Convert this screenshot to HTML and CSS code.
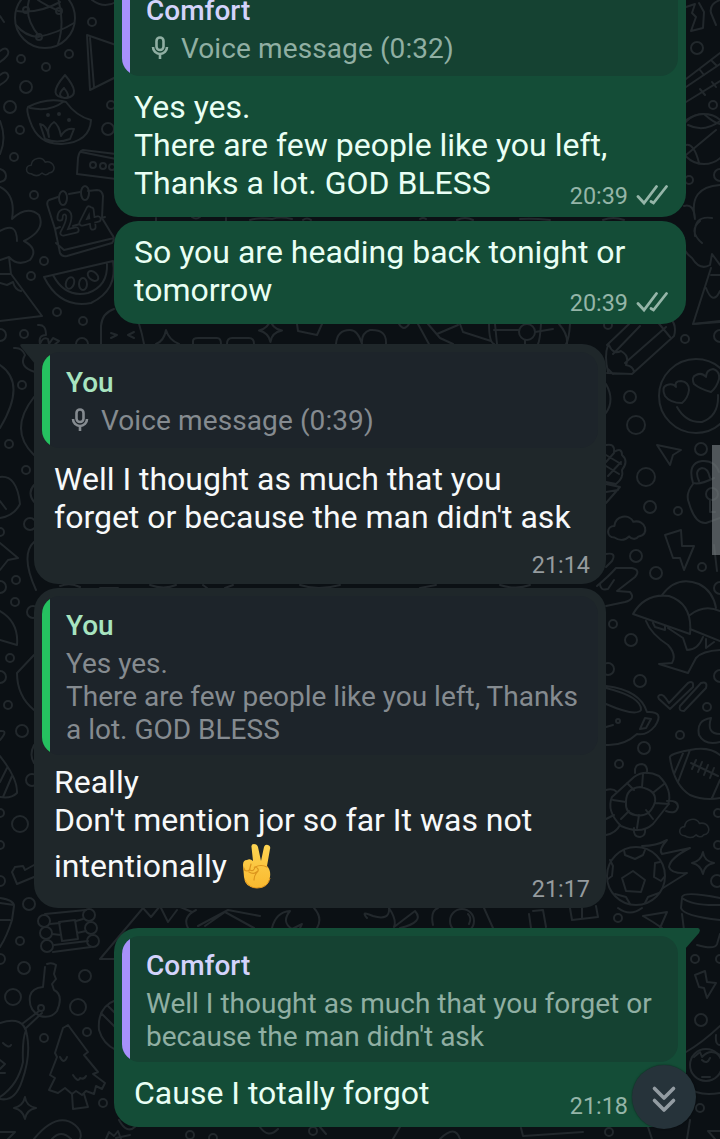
FILE: index.html
```html
<!DOCTYPE html>
<html lang="en">
<head>
    <meta charset="UTF-8">
    <meta name="viewport" content="width=device-width, initial-scale=1.0">
    <title>Comfort - Chat</title>
    <link rel="stylesheet" href="styles.css">
</head>
<body>
    <!-- shared icons -->
    <svg class="defs" width="0" height="0" aria-hidden="true">
        <symbol id="mic" viewBox="0 0 18 24">
            <rect x="5.500" y="1.500" width="7" height="12.500" rx="3.500"/>
            <path d="M2 11a7 7 0 0 0 14 0M9 18v5"/>
        </symbol>
        <symbol id="checks" viewBox="0 0 32 22">
            <path d="M2 12.500L8 19L20.500 2.500M15 17.500L17.500 19L30.500 2.500"/>
        </symbol>
        <symbol id="cloud" viewBox="0 0 40 28">
            <path d="M8 24C0 24 0 13 8 13C9 3 22 1 26 9C38 6 42 22 31 23C28 27 24 25 22 23C17 28 11 26 8 24Z"/>
        </symbol>
        <symbol id="star" viewBox="0 0 24 24">
            <path d="M12 1Q13 10 23 12Q13 14 12 23Q10 14 1 12Q10 10 12 1Z"/>
        </symbol>
    </svg>

    <svg class="wallpaper" width="720" height="1139" viewBox="0 0 720 1139" aria-hidden="true">
        <!-- left column -->
        <circle cx="45" cy="18" r="30"/>
        <path d="M17 11Q38 14 60 2M16 25Q25 36 38 37Q58 33 74 23M29 0Q24 18 39 36M56 -8Q66 20 58 44M38 0Q45 5 59 11M0 16L4 22"/>
        <circle cx="26" cy="10" r="3"/><circle cx="59" cy="11" r="3"/><circle cx="39" cy="37" r="3"/>
        <path d="M92 0Q104 9 116 2M0 51q6-5 8 0q2 4-8 11M0 75q6-5 8 0q2 4-8 10"/>
        <circle cx="92" cy="22" r="4"/><circle cx="69" cy="54" r="4"/><circle cx="21" cy="59" r="4"/><circle cx="46" cy="67" r="4"/>
        <circle cx="26" cy="87" r="6"/><circle cx="10" cy="107" r="6"/><circle cx="20" cy="130" r="4"/><circle cx="14" cy="157" r="4"/>
        <circle cx="108" cy="129" r="6"/><circle cx="111" cy="105" r="4"/>
        <path d="M87 35L116 45M87 35L90 90L116 77M90 38L94 87"/>
        <path d="M65 75Q82 95 67 98Q45 98 65 75ZM64 88q8 10 0 10q-8-2 0-10"/>
        <path d="M28 107Q45 98 62 101L66 102Q76 116 91 120Q90 142 62 144Q38 145 30 121Q26 110 28 107ZM30 108Q50 112 63 102M40 124L45 139Q57 144 70 139L74 129Q66 127 61 136Q59 125 54 122Q46 127 49 137Q47 125 40 124"/>
        <circle cx="48" cy="115" r="1"/><circle cx="59" cy="114" r="1"/><circle cx="69" cy="120" r="1"/>
        <path d="M0 121Q7 138 0 154M0 169q6 2 6 7q0 5-6 6"/>
        <use href="#cloud" x="25" y="154" width="31" height="24"/>
        <path d="M116 154L83 150Q79 151 78 158L77 174L116 179M81 152L116 159"/>
        <circle cx="93" cy="165" r="3"/><circle cx="103" cy="166" r="3"/><circle cx="112" cy="167" r="3"/>
        <circle cx="34" cy="195" r="4"/>
        <path d="M58 197L49 200Q46 202 48 207L55 229L60 253Q62 257 67 256L112 243Q116 239 111 233L102 218L103 196Q102 190 97 190L88 191M69 194L80 192M55 229L60 227M73 226L80 224M99 219L105 217M56 243L64 250L114 238"/>
        <ellipse cx="63" cy="198" rx="4" ry="7"/><ellipse cx="85" cy="193" rx="4" ry="7"/>
        <!-- calendar date -->
        <g class="date">
            <path id="date" d="M60 218Q60 211 66 212Q73 215 63 233L76 230M89 209L82 223L98 219M91 210L93 227"/>
            <use href="#date" class="date-inner"/>
        </g>
        <path d="M0 187Q16 195 12 219Q27 205 39 215Q46 230 24 241Q39 249 30 260Q18 267 9 257M0 231Q17 221 17 241M0 260L9 257L11 274L42 316L0 321M0 283l7 2l6-3q2 8 8 9M0 274H11"/>
        <circle cx="44" cy="261" r="4"/><circle cx="31" cy="276" r="4"/>
        <path d="M44 277L113 261Q118 290 91 303Q60 309 44 277ZM53 275Q65 298 88 293Q108 286 107 264"/>
        <ellipse cx="70" cy="283" rx="4" ry="6" transform="rotate(20 70 283)"/><ellipse cx="83" cy="284" rx="4" ry="6"/><ellipse cx="93" cy="276" rx="4" ry="6" transform="rotate(-50 93 276)"/>
        <circle cx="57" cy="312" r="4"/><circle cx="83" cy="321" r="4"/><circle cx="0" cy="335" r="6"/><circle cx="24" cy="334" r="4"/>
        <path d="M38 325q8-1 8 10q-8 0-6 9q3-8 8-5l1 5l4-6l6 3l-6 5M14 348q8-1 11 7q-7 12 10 17"/>
        <path d="M101 344V326Q102 313 114 309M111 333l6 2l-6 3M134 332l-6 3l6 3M139 324q3 9 5 20"/>
        <circle cx="82" cy="344" r="6"/>
        <path d="M0 365Q27 383 0 428M34 397Q8 430 34 455"/>
        <circle cx="22" cy="385" r="4"/><circle cx="9" cy="444" r="4"/><circle cx="26" cy="470" r="4"/>
        <path d="M0 477Q17 475 20 504Q14 516 0 518M0 501l6 8M34 485Q27 493 34 502"/>
        <circle cx="30" cy="524" r="6"/><circle cx="0" cy="532" r="4"/>
        <path d="M0 543L18 558L8 560L0 570M34 542Q20 555 36 590"/>
        <circle cx="16" cy="580" r="4"/><circle cx="0" cy="587" r="6"/><circle cx="15" cy="602" r="4"/><circle cx="33" cy="612" r="6"/>
        <path d="M0 611Q19 622 17 645L0 640M34 655L17 673Q17 696 34 710"/>
        <circle cx="10" cy="658" r="4"/><circle cx="0" cy="677" r="6"/><circle cx="8" cy="705" r="4"/><circle cx="22" cy="731" r="6"/>
        <path d="M0 731q9-1 0 9M34 745q-5 10 0 18M0 756Q18 779 17 793Q11 799 0 797M0 782L7 768M3 797L12 776"/>
        <circle cx="32" cy="780" r="6"/><circle cx="0" cy="813" r="4"/><circle cx="20" cy="824" r="8"/><circle cx="0" cy="845" r="4"/><circle cx="0" cy="881" r="5"/>
        <path d="M15 867l8-1l2 4l9-5M15 867l-3 5l5 12l17-7M0 898Q14 900 14 906L12 920Q7 936 0 947M0 903L14 905M0 920H10"/>
        <circle cx="29" cy="904" r="6"/><circle cx="20" cy="941" r="4"/><circle cx="0" cy="959" r="5"/><circle cx="24" cy="968" r="6"/><circle cx="13" cy="997" r="8"/><circle cx="85" cy="976" r="6"/><circle cx="78" cy="1007" r="8"/><circle cx="87" cy="1032" r="4"/><circle cx="44" cy="1038" r="4"/><circle cx="103" cy="1103" r="4"/>
        <circle cx="44" cy="921" r="6"/><circle cx="46" cy="933" r="6"/><circle cx="47" cy="946" r="6"/><circle cx="89" cy="915" r="6"/><circle cx="91" cy="928" r="6"/><circle cx="93" cy="941" r="6"/>
        <path d="M45 914L86 910M50 924L60 923M52 934L61 935M54 945L88 941M53 952L91 947M76 921L83 919M77 933L86 931M59 922L75 920L78 939L62 941Z"/>
        <path d="M100 959L143 908L151 917L160 906L168 922L177 910M100 959H116M178 906l14 6M196 910Q182 917 188 928M205 926L225 912L254 928M198 926L228 910L260 916"/>
        <path d="M47 964q5-2 9 1l-2 9l2 5l-4 5l2 6q10 5 3 21q-6 8-17 5q-12-6-10-20q2-8 13-9l2-20"/>
        <circle cx="41" cy="1008" r="3"/>
        <path d="M39 1011L22 1024M42 1013L25 1029M0 1023Q24 1015 27 1035Q31 1056 22 1081Q15 1102 0 1099M0 1097Q18 1085 23 1062Q22 1040 26 1030M3 1043q6 6 8 2M0 1060l5 4l-5 5M0 1073h5"/>
        <path d="M63 1028L68 1025L88 1052L84 1055L98 1072L93 1074L105 1083L102 1089L96 1086L94 1094L86 1091L82 1095L76 1091L72 1094L65 1088L58 1093L49 1090L55 1078L50 1075L57 1057L55 1053L63 1028M60 1057q4 8 7 0M73 1075q5 8 7 3q4 2 6-2M72 1094L73 1109L88 1107L84 1094"/>
        <path d="M116 1000Q97 1007 99 1030Q103 1044 116 1050M108 1006L116 1014M102 1014L116 1028"/>
        <use href="#star" x="13" y="1096" width="24" height="24"/>
        <path d="M0 1132H15L8 1139M34 1139Q57 1111 75 1125Q83 1132 80 1139M52 1139q9-10 19 0M106 1139l3-7l5 4l4-5l3 8M119 1120q8 15 17 6"/>
        <circle cx="190" cy="1135" r="4"/><circle cx="213" cy="1138" r="4"/>
        <!-- gaps between the bubbles -->
        <path d="M156 218v3M192 217q4 3 8 0M226 218v3M250 220q10-3 22-1q8-3 20 0M303 220q4-3 8 0M420 219q3-2 6 0M457 220q8-4 16 0M520 219q12-1 30 1M603 220q10-4 21 0"/>
        <path d="M156 344Q164 341 166 330Q169 340 179 344M193 344v-3q0-3 5-3h19q4 0 4 6M227 344q0-6 5-6h17q5 0 5 6M297 324l1 7l19 4l5-11M336 344Q337 330 350 330Q358 330 362 344Q361 333 370 330Q387 329 386 344M399 324q5 8 10 0M418 324l12 22M428 324L440 338L453 344M437 334L458 325M460 324l3 8l28 9M489 324q0 18 5 20M495 324l2 20M541 324q-1 16-3 20"/>
        <use href="#star" x="258" y="318" width="25" height="25"/>
        <circle cx="527" cy="332" r="8"/><path d="M494 330h25M535 332l18-3M525 340v6M559 324q9 10 8 20M570 324q-1 16-4 20"/>
        <path d="M60 586q10-4 20 1M100 588h18M150 585q14 5 26 0M203 585l4 3M225 588l8-3M300 585q18 6 40 0M420 588l16-3M500 585q16 5 30 0"/>
        <path d="M272 928Q276 912 290 911Q281 922 292 929L302 924Q296 940 275 940M314 908Q323 918 317 928M367 918Q360 910 373 916Q390 921 389 908Q397 920 394 927L415 911Q425 922 400 928M433 925Q430 911 438 908M484 908l9 20M529 914l2 14M533 911l10-1l3 17M570 908l2 12l26-3l-2-11M582 908v11M618 908q12 9 24 0"/>
        <circle cx="462" cy="921" r="12"/><path d="M468 914q4 4 1 10"/>
        <path d="M116 1138l14-3M260 1127q8 12 18 2M320 1127l6 7M400 1127l-7 12M440 1139q15-15 20 0M521 1128l2 8l60-4"/>
        <circle cx="313" cy="1131" r="4"/><circle cx="609" cy="1132" r="4"/>
        <!-- right column -->
        <path d="M686 7l9-3l-3 9l4 4l-5 14l12-3l1-16l-5-9M720 0q-11 4-9 13l5 12M686 79L720 53M686 87L720 64M686 102L720 81M700 70l4 5M700 89l5 6M712 61l5 5M712 82l4 5"/>
        <circle cx="697" cy="48" r="6"/><circle cx="713" cy="105" r="4"/><circle cx="704" cy="139" r="25"/>
        <path d="M688 125Q704 133 720 121M686 120Q697 113 704 114Q714 123 720 124M686 145Q694 143 699 163M686 155L716 130"/>
        <circle cx="689" cy="180" r="4"/><circle cx="720" cy="175" r="6"/>
        <path d="M720 185Q688 187 695 219Q694 203 684 206M684 238Q680 249 692 258M695 236Q693 215 712 218M702 243Q688 231 700 221M692 258Q700 271 710 265L712 254L720 265M711 268L693 324L720 322M706 288q7 18 14 3M711 275h9"/>
        <path d="M607 345L629 324M608 345Q604 356 608 372M613 354L640 326M625 363L666 327M607 373L632 374L674 336Q677 326 671 319M609 345q4 10 12 6q9 5 5 14q7 1 8 7M693 324L720 321M656 320l14 17M613 374l-5-5"/>
        <circle cx="685" cy="339" r="4"/><circle cx="720" cy="336" r="6"/><circle cx="608" cy="325" r="4"/>
        <circle cx="696" cy="396" r="37"/>
        <path d="M676 387Q674 381 681 381Q689 382 689 390Q688 398 682 403Q670 403 665 396Q661 387 667 385Q673 383 676 387Z"/>
        <path d="M706 377Q706 370 713 369Q720 371 719 379Q717 387 711 392Q700 389 694 384Q691 377 696 375Q702 372 706 377ZM677 407Q686 423 702 422Q719 416 718 395"/>
        <path d="M606 384Q615 400 606 413"/>
        <circle cx="630" cy="397" r="6"/><circle cx="636" cy="425" r="9"/><circle cx="646" cy="477" r="9"/><circle cx="650" cy="507" r="6"/><circle cx="678" cy="511" r="4"/><circle cx="701" cy="449" r="6"/>
        <path d="M657 445L681 450L673 455L670 465Z"/>
        <path d="M606 445q9-2 8 7q8-5 8 3q7 6 0 15q2 8-6 14l-10-2M606 455l15 9M606 466l13 8M614 453L606 462M621 462L608 476M606 484L620 487L606 503M606 492l12-2"/>
        <path d="M693 483Q687 463 702 461Q715 460 719 472M699 481Q694 470 702 468Q708 468 710 478M693 483Q700 485 714 478M693 484Q685 494 689 503Q695 524 706 523L720 518"/>
        <circle cx="712" cy="494" r="6"/><path d="M710 500v12h5"/>
        <use href="#cloud" x="606" y="511" width="42" height="32"/>
        <path d="M665 535L681 530L682 546L694 546L684 570L680 558L673 558Z"/>
        <circle cx="636" cy="556" r="6"/><circle cx="656" cy="573" r="6"/><circle cx="702" cy="567" r="4"/><circle cx="720" cy="588" r="6"/><circle cx="613" cy="624" r="4"/><circle cx="631" cy="640" r="6"/>
        <path d="M606 554q11-2 6 7l-6 6M597 586q12-10 19-18L632 568Q641 570 635 577L617 591L630 592Q636 599 625 602L606 606M600 584q0 7 8 5l6-9M714 545l3 26"/>
        <path d="M662 595Q677 575 699 584Q713 591 716 608M633 614Q645 593 669 596Q693 604 690 634ZM690 615Q704 604 720 611M690 629L720 641M646 621Q651 634 668 645Q677 655 672 663L659 664L688 673L696 658Q702 651 720 650M668 628L683 638L687 650Q698 650 703 637M653 623l2 4l10 3v-4M706 639v9l8-6"/>
        <circle cx="608" cy="669" r="6"/><circle cx="640" cy="681" r="6"/><circle cx="707" cy="707" r="4"/><circle cx="680" cy="735" r="4"/><circle cx="720" cy="676" r="6"/><circle cx="644" cy="748" r="6"/><circle cx="619" cy="764" r="4"/>
        <path d="M660 695q3-2 9 8L688 683q6-3 5 4L670 709L659 699q-2-3 1-4M680 706L701 683q7-2 5 5L684 711q-6 0-4-5"/>
        <path d="M606 688Q642 697 641 710Q636 717 606 704M606 686Q640 690 647 712Q665 711 655 726Q647 736 637 734Q624 746 606 745M645 718l6 1l-5 9l-6 1ZM606 727l7-2"/><circle cx="618" cy="721" r="2"/>
        <path d="M711 718Q696 720 699 735Q705 746 720 742M711 718Q706 734 720 734"/>
        <path d="M670 758Q668 754 690 750Q709 746 720 755M670 758Q674 785 690 795Q704 801 720 798M684 751L674 774M690 750L678 782M691 763l27 13M696 760l-4 9M702 762l-4 10M708 765l-4 10M714 768l-4 10M712 798l8-18"/>
        <path d="M612 797L634 777Q645 769 659 776Q673 790 668 805L653 824Q641 835 621 826Q606 811 612 797ZM626 802Q626 788 640 787Q657 790 655 802Q650 818 635 815Q625 813 626 802ZM643 774l-1 13M664 784l-10 8M669 804l-14-1M653 819l-7-9M637 828l2-13M621 819l8-8M613 800l13 2M627 783l7 7"/>
        <path d="M635 773q-1-9 7-9q6 1 5 9M667 801q11-1 11 6q-2 8-12 4M634 828q-1 9 6 9q6-1 5-8M606 790q7-2 11 2M606 819l8-4M620 825q-4 8-14 10"/>
        <use href="#cloud" x="678" y="816" width="33" height="23"/>
        <circle cx="718" cy="813" r="4"/><circle cx="718" cy="845" r="4"/><circle cx="717" cy="881" r="6"/>
        <circle cx="636" cy="876" r="29"/>
        <path d="M633 871L645 880L641 892L626 891L622 878ZM624 850L625 855L635 859L643 855L645 850M660 862L655 863L654 877L661 881L665 876M610 860L613 866L612 876L608 879M615 894L626 897L630 904M645 903L648 897L659 893M642 846Q656 846 667 840Q658 850 662 854L690 848Q670 858 669 867Q671 874 687 873L663 888"/>
        <use href="#star" x="691" y="850" width="24" height="26"/>
        <circle cx="618" cy="918" r="4"/>
        <path d="M643 916L667 912L660 928M643 916L653 922L662 928M682 897Q684 891 720 898M682 898L681 908Q683 916 720 920M682 898Q693 906 720 905M682 914L684 930M697 945Q715 950 717 944L720 934"/>
        <circle cx="695" cy="959" r="4"/><circle cx="720" cy="959" r="4"/><circle cx="701" cy="1020" r="6"/><circle cx="700" cy="1108" r="4"/>
        <path d="M695 975l10-4l2 11l9 1l-9 15l-3-10l-5-1ZM686 1052Q702 1043 720 1026M716 1035q-1 10 4 10M694 1057l6-5l2 5Q710 1048 720 1055"/>
        <circle cx="706" cy="1065" r="16"/><path d="M702 1060q5 5 8-2M702 1077h8M686 1086q12 11 34 7M648 1127l4 12M690 1120l-3 19M708 1131h12M708 1131l7 8"/>
    </svg>

    <main class="chat">
        <section class="message out">
            <div class="quote">
                <div class="quote-content">
                    <div class="quote-name">Comfort</div>
                    <div class="voice"><svg class="mic"><use href="#mic"/></svg>Voice message (0:32)</div>
                </div>
            </div>
            <div class="text">Yes yes.<br>There are few people like you left,<br>Thanks a lot. GOD BLESS</div>
            <div class="meta">20:39<svg class="checks"><use href="#checks"/></svg></div>
        </section>

        <section class="message out">
            <div class="text">So you are heading back tonight or<br>tomorrow</div>
            <div class="meta">20:39<svg class="checks"><use href="#checks"/></svg></div>
        </section>

        <section class="message in first">
            <svg class="tail" viewBox="0 0 15 22"><path d="M15 0H2Q-1 0 1 3L15 20Z"/></svg>
            <div class="quote">
                <div class="quote-content">
                    <div class="quote-name">You</div>
                    <div class="voice"><svg class="mic"><use href="#mic"/></svg>Voice message (0:39)</div>
                </div>
            </div>
            <div class="text">Well I thought as much that you<br>forget or because the man didn't ask</div>
            <div class="meta own-line">21:14</div>
        </section>

        <section class="message in">
            <div class="quote">
                <div class="quote-content">
                    <div class="quote-name">You</div>
                    <div class="quote-text">Yes yes.<br>There are few people like you left, Thanks<br>a lot. GOD BLESS</div>
                </div>
            </div>
            <div class="text tight">Really<br>Don't mention jor so far It was not
                <div class="emoji-line">intentionally
                    <svg class="emoji" viewBox="0 0 32 48" role="img" aria-label="victory hand">
                        <defs>
                            <linearGradient id="skin" x1="0" y1="0" x2="0" y2="1">
                                <stop offset="0" stop-color="#fed553"/>
                                <stop offset="1" stop-color="#f9b92f"/>
                            </linearGradient>
                        </defs>
                        <path d="M10.500 5Q10 2 13 2Q16 2 17 5L20 19L23 5Q24 2 27 3Q30 4 29 7L26 24Q30 28 29 35Q27 46 16 46Q4 46 3 35L2 23Q2 18 6 18Q9 16 12 19Z" fill="url(#skin)"/>
                        <path d="M3 26Q3 29 6 29Q9 29 9 26L10 22M9 28Q13 30 14 25M8 30Q13 33 17 29Q18 26 14 25Q20 22 26 25M17 29Q13 33 13 38" fill="none" stroke="#dc951d" stroke-width="1.2" stroke-linecap="round"/>
                        <path d="M4 38Q8 46 16 46Q27 46 29 36" fill="none" stroke="#e89a1e" stroke-width="1"/>
                    </svg>
                </div>
            </div>
            <div class="meta after-emoji">21:17</div>
        </section>

        <section class="message out first">
            <svg class="tail" viewBox="0 0 15 22"><path d="M0 0H13Q16 1 14 5L0 21Z"/></svg>
            <div class="quote">
                <div class="quote-content">
                    <div class="quote-name">Comfort</div>
                    <div class="quote-text">Well I thought as much that you forget or<br>because the man didn't ask</div>
                </div>
            </div>
            <div class="text">Cause I totally forgot</div>
            <div class="meta">21:18<svg class="checks"><use href="#checks"/></svg></div>
        </section>
    </main>

    <div class="scrollbar"></div>
    <button class="scroll-down" aria-label="Scroll to bottom">
        <svg width="26" height="28" viewBox="0 0 26 28"><path d="M3.500 3.500L13 13L22.500 3.500M3.500 15.500L13 25L22.500 15.500"/></svg>
    </button>
</body>
</html>
```
FILE: styles.css
```css
* {
    box-sizing: border-box;
}
body {
    position: relative;
    margin: 0;
    height: 1139px;
    overflow: hidden;
    background: #0b1014;
    color: #fff;
    font-family: Roboto, "Noto Sans", sans-serif;
}
.defs {
    position: absolute;
}
.wallpaper {
    position: absolute;
    top: 0;
    left: 0;
    fill: none;
    stroke: #22282c;
    stroke-width: 2;
    stroke-linecap: round;
    stroke-linejoin: round;
}
.date {
    stroke-width: 7;
}
.date-inner {
    stroke: #0b1014;
    stroke-width: 3.5;
}

/* messages */
.chat {
    position: relative;
    display: flex;
    flex-direction: column;
    gap: 4px;
    margin-top: -28px;
    padding: 0 34px;
}
.message {
    position: relative;
    display: flex;
    flex-direction: column;
    width: 572px;
    padding-bottom: 7px;
    border-radius: 24px;
}
.message.first {
    margin-top: 16px;
}
.out {
    align-self: flex-end;
    background: #144d37;
    color: #e9fff4;
}
.in {
    align-self: flex-start;
    padding-bottom: 5px;
    background: #1f272a;
    color: #f7f9fa;
}
.out.first {
    border-top-right-radius: 0;
}
.in.first {
    border-top-left-radius: 0;
}
.tail {
    position: absolute;
    top: 0;
    width: 15px;
    height: 22px;
}
.out .tail {
    left: 571px;
    fill: #144d37;
}
.in .tail {
    right: 571px;
    fill: #1f272a;
}
.text {
    padding: 12px 20px 0;
    font-size: 32px;
    line-height: 38px;
    white-space: nowrap;
}
.text.tight {
    padding-top: 8px;
}
.emoji-line {
    display: flex;
    align-items: center;
    gap: 14px;
    height: 54px;
}
.emoji {
    width: 32px;
    height: 48px;
}
.meta {
    display: flex;
    align-items: center;
    align-self: flex-end;
    gap: 8px;
    margin-top: -20px;
    padding-right: 16px;
    color: #959b9e;
    font-size: 23.4px;
    line-height: 28px;
}
.meta.own-line {
    margin-top: 15px;
}
.meta.after-emoji {
    margin-top: -18px;
}
.out .meta {
    padding-right: 18px;
    color: #95b5a8;
}
.checks {
    width: 32px;
    height: 22px;
    margin-top: -3px;
    fill: none;
    stroke: currentColor;
    stroke-width: 2.8;
    stroke-linecap: round;
}

/* quoted message */
.quote {
    display: flex;
    margin: 8px 8px 0;
    border-radius: 18px;
    overflow: hidden;
}
.quote::before {
    content: "";
    width: 8px;
}
.out .quote {
    background: #154232;
    color: #90afa3;
}
.out .quote::before {
    background: #a791fb;
}
.in .quote {
    background: #1d242a;
    color: #858b90;
}
.in .quote::before {
    background: #25c160;
}
.quote-content {
    padding: 12px 16px 9px;
    font-size: 28px;
    line-height: 33px;
    white-space: nowrap;
}
.quote-name {
    margin-bottom: 3px;
    font-weight: 500;
    line-height: 36px;
}
.out .quote-name {
    color: #d3d3fb;
}
.in .quote-name {
    color: #a8e4c0;
}
.quote-name:has(+ .voice) {
    margin: 1px 0;
}
.voice {
    display: flex;
    align-items: center;
    gap: 12px;
    height: 36px;
    margin-bottom: 1px;
    padding-left: 5px;
    letter-spacing: 0.1px;
}
.mic {
    width: 18px;
    height: 24px;
    fill: none;
    stroke: currentColor;
    stroke-width: 2.6;
}

/* floating controls */
.scrollbar {
    position: absolute;
    top: 445px;
    right: 0;
    width: 8px;
    height: 110px;
    background: rgba(118, 124, 128, 0.65);
}
.scroll-down {
    position: absolute;
    top: 1065px;
    left: 632px;
    display: flex;
    align-items: center;
    justify-content: center;
    width: 64px;
    height: 64px;
    padding: 4px 0 0;
    border: 0;
    border-radius: 50%;
    background: #26333a;
    box-shadow: 0 0 2px rgba(0, 0, 0, 0.5);
}
.scroll-down svg {
    fill: none;
    stroke: #939ca2;
    stroke-width: 3.6;
    stroke-linecap: round;
    stroke-linejoin: round;
}
```
